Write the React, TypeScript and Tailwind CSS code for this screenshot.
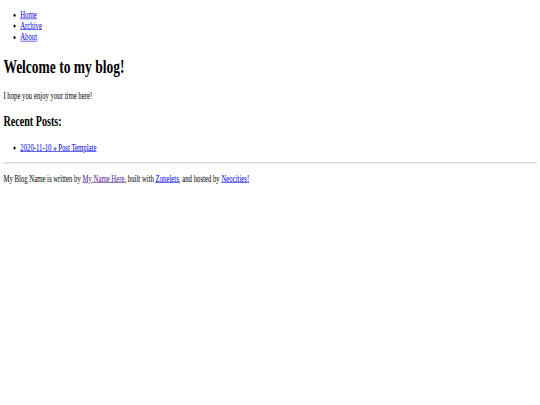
export default function App() {
  return (
    <div className="w-[540px] h-[405px] overflow-hidden bg-white">
      <div
        className="w-[1280px] h-[675px] origin-top-left scale-x-[0.421875] scale-y-[0.6] p-[8px] text-black text-[16px] leading-[1.15]"
        style={{ fontFamily: '"Liberation Serif", "Times New Roman", serif' }}
      >
        <ul className="list-disc pl-[40px] my-[8px]">
          <li><a href="#" className="text-[#0000EE] underline">Home</a></li>
          <li><a href="#" className="text-[#0000EE] underline">Archive</a></li>
          <li><a href="#" className="text-[#0000EE] underline">About</a></li>
        </ul>
        <h1 className="text-[32px] font-bold leading-[1.15] my-[21.44px]">Welcome to my blog!</h1>
        <p className="my-[16px]">I hope you enjoy your time here!</p>
        <h2 className="text-[24px] font-bold leading-[1.15] my-[19.92px]">Recent Posts:</h2>
        <ul className="list-disc pl-[40px] my-[16px]">
          <li><a href="#" className="text-[#0000EE] underline">2020-11-10 » Post Template</a></li>
        </ul>
        <hr className="my-[8px] border-0 border-t-[1px] border-b-[1px] border-t-[#9a9a9a] border-b-[#eeeeee]" />
        <p className="my-[16px]">
          My Blog Name is written by <a href="#" className="text-[#551A8B] underline">My Name Here</a>, built with{" "}
          <a href="#" className="text-[#0000EE] underline">Zonelets</a>, and hosted by{" "}
          <a href="#" className="text-[#0000EE] underline">Neocities!</a>
        </p>
      </div>
    </div>
  );
}
